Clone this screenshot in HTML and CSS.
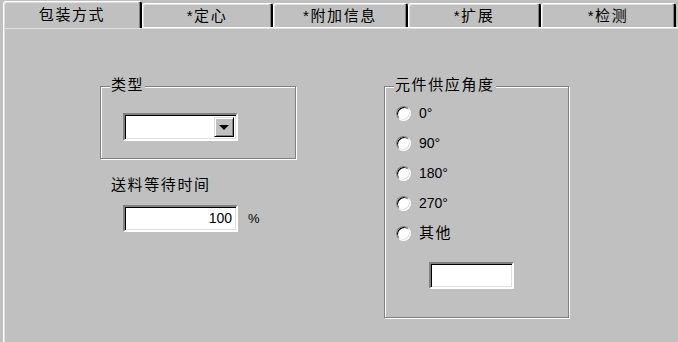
FILE: index.html
```html
<!DOCTYPE html>
<html lang="zh-CN">
<head>
    <meta charset="UTF-8">
    <title>包装方式</title>
    <link rel="stylesheet" href="styles.css">
</head>
<body>
<div class="tabs">
    <div class="tab tab-on w1">包装方式</div>
    <div class="tab w2">*定心</div>
    <div class="tab w3">*附加信息</div>
    <div class="tab w4">*扩展</div>
    <div class="tab w5">*检测</div>
</div>
<div class="panel">
    <div class="col-left">
        <div class="group group-type">
            <div class="group-title">类型</div>
            <div class="combo">
                <span class="combo-btn"><i class="arrow"></i></span>
            </div>
        </div>
        <div class="label">送料等待时间</div>
        <div class="field-row">
            <div class="edit num">100</div>
            <span class="unit">%</span>
        </div>
    </div>
    <div class="group group-angle">
        <div class="group-title">元件供应角度</div>
        <ul class="radios">
            <li><span class="radio"></span>0°</li>
            <li><span class="radio"></span>90°</li>
            <li><span class="radio"></span>180°</li>
            <li><span class="radio"></span>270°</li>
            <li><span class="radio"></span><span class="cjk">其他</span></li>
        </ul>
        <div class="edit edit-other"></div>
    </div>
</div>
</body>
</html>
```

FILE: styles.css
```css
*{ margin: 0; padding: 0; }
ul{ list-style: none; }
body{
    width: 678px;
    height: 342px;
    overflow: hidden;
    background: #c0c0c0;
    color: #000;
    font: 15px/18px "Liberation Sans", "Noto Sans CJK SC", sans-serif;
}

/* tab strip */
.tabs{
    display: flex;
    align-items: flex-end;
    height: 27px;
    padding-left: 3px;
}
.tab{
    box-sizing: border-box;
    display: flex;
    align-items: center;
    justify-content: center;
    height: 24px;
    padding-top: 1px;
    border-top: 1px solid #fff;
    border-left: 1px solid #fff;
    border-right: 2px solid #000;
    border-radius: 3px 3px 0 0;
    box-shadow: inset -1px 0 #808080, inset 1px 1px #dfdfdf;
    letter-spacing: 1.6px;
}
.tab-on{
    height: 27px;
    margin-bottom: -1px;
    padding-top: 0;
    background: #c0c0c0;
    z-index: 1;
}
.w1{ width: 139px; }
.w2{ width: 131px; }
.w3{ width: 135px; }
.w4{ width: 133px; }
.w5{ width: 135px; }

/* page */
.panel{
    box-sizing: border-box;
    display: grid;
    grid-template-columns: 196px 185px;
    column-gap: 88px;
    align-items: start;
    height: 315px;
    margin-left: 3px;
    padding: 58px 0 0 96px;
    border-top: 1px solid #fff;
    border-left: 1px solid #fff;
    box-shadow: inset 1px 1px #dfdfdf;
}

.group{
    box-sizing: border-box;
    border: 1px solid #808080;
    box-shadow: inset 1px 1px #fff, 1px 1px #fff;
}
.group-title{
    width: fit-content;
    margin: -11px 0 0 9px;
    padding: 0 1px;
    background: #c0c0c0;
    letter-spacing: 1.6px;
}
.group-type{
    height: 73px;
}
.group-angle{
    height: 232px;
}

/* sunken controls */
.edit,.combo{
    box-sizing: border-box;
    background: #fff;
    border: 2px solid;
    border-color: #808080 #fff #fff #808080;
    box-shadow: inset 1px 1px #000, inset -1px -1px #dfdfdf;
}
.combo{
    display: flex;
    justify-content: flex-end;
    width: 115px;
    height: 28px;
    margin: 19px 0 0 22px;
    padding: 2px;
}
.combo-btn{
    box-sizing: border-box;
    display: flex;
    align-items: center;
    justify-content: center;
    width: 20px;
    background: #c0c0c0;
    border: 1px solid;
    border-color: #dfdfdf #000 #000 #dfdfdf;
    box-shadow: inset 1px 1px #fff, inset -1px -1px #808080;
}
.arrow{
    width: 0;
    height: 0;
    border-left: 5px solid transparent;
    border-right: 5px solid transparent;
    border-top: 5px solid #000;
}

.label{
    margin: 17px 0 0 11px;
    letter-spacing: 1.6px;
}
.field-row{
    display: flex;
    align-items: center;
    margin: 11px 0 0 23px;
}
.edit{
    height: 27px;
}
.num{
    width: 115px;
    padding-right: 4px;
    text-align: right;
    font-size: 14px;
    line-height: 23px;
}
.unit{
    margin-left: 10px;
    font-size: 13px;
}

/* radios */
.radios{
    margin-top: 4px;
}
.radios li{
    display: flex;
    align-items: center;
    gap: 8px;
    height: 30px;
    padding-left: 11px;
    font-size: 14px;
}
.radios .cjk{
    font-size: 15px;
    letter-spacing: 1.6px;
}
.radio{
    box-sizing: border-box;
    width: 15px;
    height: 15px;
    border-radius: 50%;
    background: #fff;
    border: 1px solid;
    border-color: #808080 #fff #fff #808080;
    box-shadow: inset 1px 1px #000, inset -1px -1px #dfdfdf;
}
.edit-other{
    width: 85px;
    margin: 14px 0 0 44px;
}
```
